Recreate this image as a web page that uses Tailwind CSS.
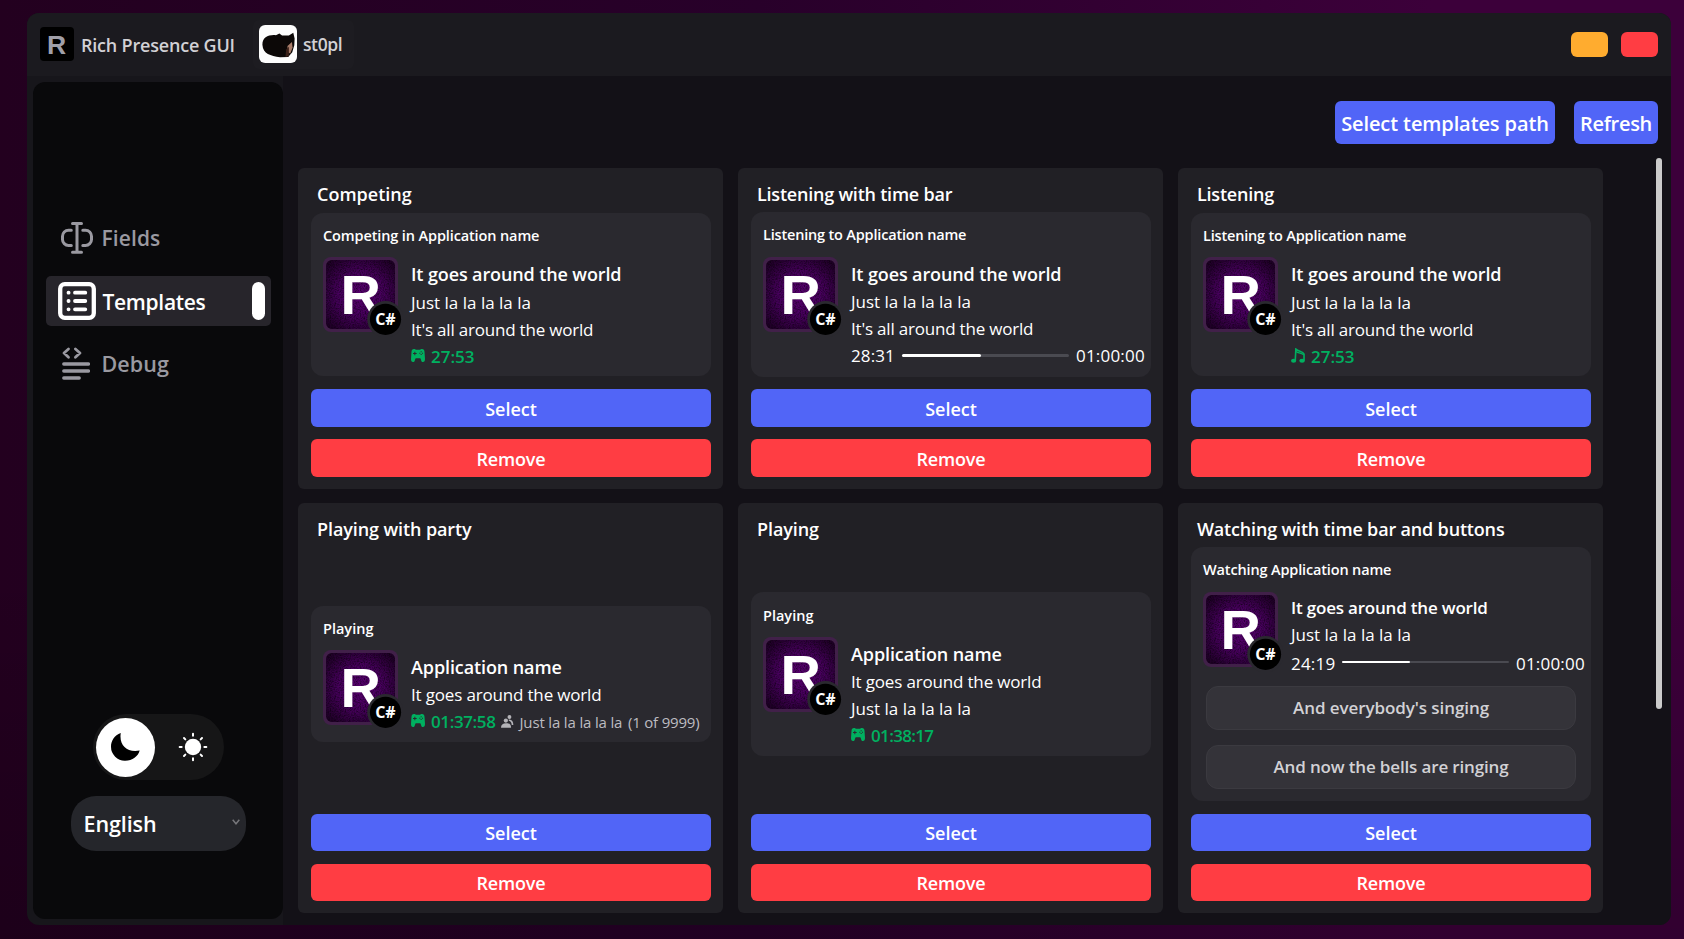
<!DOCTYPE html>
<html lang="en">
<head>
<meta charset="utf-8">
<title>Rich Presence GUI</title>
<script src="https://cdn.jsdelivr.net/npm/@tailwindcss/browser@4"></script>
</head>
<body class="h-[939px] w-[1684px] overflow-hidden bg-[linear-gradient(to_bottom,transparent_60%,rgba(0,0,0,0.18)),linear-gradient(to_right,#23001f,#28002a_45%,#3c003a_85%)] pl-[27px] pt-[13px] font-['Open_Sans','Noto_Sans',sans-serif] font-semibold text-white">

<svg class="absolute h-0 w-0">
  <defs>
    <radialGradient id="glow" cx="50%" cy="50%" r="68%">
      <stop offset="0" stop-color="#5a0072"/><stop offset="0.45" stop-color="#48005e"/><stop offset="1" stop-color="#1a0020"/>
    </radialGradient>
    <filter id="grain" x="0" y="0" width="100%" height="100%">
      <feTurbulence type="fractalNoise" baseFrequency="0.8" numOctaves="2" seed="4"/>
      <feColorMatrix values="0 0 0 0 0  0 0 0 0 0  0 0 0 0 0  1.2 0 0 0 -0.45"/>
      <feComposite in2="SourceGraphic" operator="in"/>
    </filter>
    <symbol id="cover" viewBox="0 0 80 80">
      <rect x="0" y="0" width="75" height="75" rx="8" fill="#412049"/>
      <rect x="3" y="3" width="69" height="69" rx="6" fill="url(#glow)"/>
      <rect x="3" y="3" width="69" height="69" rx="6" fill="#000" filter="url(#grain)"/>
      <text x="17.6" y="57.3" font-family="Liberation Sans, sans-serif" font-weight="700" font-size="56" fill="#fff">R</text>
      <circle cx="62.5" cy="62.3" r="18.2" fill="#2a292f"/>
      <circle cx="62.5" cy="62.3" r="15.6" fill="#000"/>
      <text x="52.2" y="68.3" textLength="20.5" lengthAdjust="spacingAndGlyphs" font-family="Open Sans, sans-serif" font-weight="700" font-size="16.5" fill="#fff">C#</text>
    </symbol>
    <symbol id="gamepad" viewBox="0 0 42 39">
      <path fill="#00b060" fill-rule="evenodd" d="M9 0C4 0 2 3 1.500 8L0 30c0 6 2 9 6 9s5-3 6-7l2-4h14l2 4c1 4 2 7 6 7s6-3 6-9L40.500 8C40 3 38 0 33 0c-3 0-4 2-6 2H15c-2 0-3-2-6-2zM10 8h3v4h4v3h-4v4h-3v-4H6v-3h4zM29 7h3v3h-3zM33 11h3v3h-3zM29 15h3v3h-3zM25 11h3v3h-3z"/>
    </symbol>
    <symbol id="music" viewBox="0 0 43 45">
      <g fill="none" stroke="#00b060" stroke-width="5"><path d="M13 38 15 3C23 11 36 8 40 18V38"/><path stroke-width="4" d="M15 10c8 6 20 5 24 11"/></g>
      <ellipse cx="8" cy="38.500" rx="8" ry="6" fill="#00b060"/><ellipse cx="34" cy="38.500" rx="8.500" ry="6" fill="#00b060"/>
    </symbol>
    <symbol id="group" viewBox="0 0 40 40">
      <g fill="#b4b3b8"><circle cx="26" cy="6" r="6"/><path d="M24 14c9-1 14 6 14 17h-5c0-7-3-11-9-13z"/><circle cx="15" cy="17" r="6.500"/><path d="M0 39c0-9 5-14 16-14s15 5 15 14z"/></g>
    </symbol>
  </defs>
</svg>

<div class="flex h-[912px] w-[1644px] flex-col overflow-hidden rounded-xl bg-[#17161b]">
  <header class="flex h-[63px] shrink-0 items-center bg-[#1b1a1f] pl-[13px] pr-[13px]">
    <svg class="-mt-[1px] h-[34px] w-[34px]" viewBox="0 0 34 34"><rect width="34" height="34" rx="4" fill="#000"/><text x="7" y="26.800" font-family="Liberation Sans, sans-serif" font-weight="700" font-size="26.500" fill="#a09fa8">R</text></svg>
    <span class="ml-[7px] mt-[2px] w-[172px] whitespace-nowrap text-[18px] tracking-[-0.2px] text-[#d2d1d5]">Rich Presence GUI</span>
    <div class="flex h-[49px] w-[101px] items-center rounded-md bg-[#1d1c21] pl-[6px]">
      <svg class="-mt-[1px] h-[38px] w-[38px]" viewBox="0 0 112 112">
        <rect width="112" height="112" rx="18" fill="#fdfdfd"/>
        <path fill="#0c0807" d="M10 58C10 36 28 28 50 30L60 25 68 31 88 31 101 23 105 40 104 60 98 80 86 94 62 95C34 90 12 86 10 58Z"/>
        <path fill="#a87c69" d="M84 62 97 50 99 66 92 84 84 80Z"/><path fill="#3a2018" d="M80 72 88 64 88 92 78 94Z"/>
      </svg>
      <span class="ml-[6px] text-[17.5px] tracking-[-0.4px] text-[#d2d1d5]">st0pl</span>
    </div>
    <div class="ml-auto flex gap-[13px]">
      <button class="h-[25px] w-[37px] rounded-md bg-[#ffac2f]"></button>
      <button class="h-[25px] w-[37px] rounded-md bg-[#ff3d43]"></button>
    </div>
  </header>

  <div class="flex min-h-0 flex-1">
    <aside class="ml-[6px] mt-[6px] flex h-[837px] w-[250px] shrink-0 flex-col items-center rounded-xl bg-[#09090b]">
      <nav class="mt-[131.500px] w-[225px] text-[21px] leading-[30px] text-[#9a99a1]">
        <a class="flex h-[49px] items-center pl-[15px]">
          <svg class="h-8 w-8" viewBox="0 0 32 32" fill="none" stroke="#9a99a1" stroke-width="3" stroke-linecap="round"><path d="M11.500 1.600h9M11.500 30.300h9M16 2v28M10.300 8.200H7.500a6 6 0 0 0-6 6v3.200a6 6 0 0 0 6 6h2.800M21.800 8.200h2.700a6 6 0 0 1 6 6v3.200a6 6 0 0 1-6 6h-2.700"/></svg>
          <span class="ml-[9px] tracking-[0.1px]">Fields</span>
        </a>
        <a class="mt-[13px] flex h-[50px] items-center rounded-[5px] bg-[#27252b] pl-[12px] pr-[6px] text-white">
          <svg class="h-[38px] w-[38px]" viewBox="0 0 38 38" fill="none" stroke="#fff" stroke-linecap="round"><rect x="2.200" y="2.200" width="33.600" height="33.600" rx="4.500" stroke-width="4.300"/><path stroke-width="3.800" d="M17 10.700h10.300M17 19h10.300M17 27.300h10.300M10.500 10.700h.1M10.500 19h.1M10.500 27.300h.1"/></svg>
          <span class="ml-[7px] mt-[2px] tracking-[-0.3px]">Templates</span>
          <span class="ml-auto h-[38px] w-[13px] rounded-full bg-white"></span>
        </a>
        <a class="mt-[13px] flex h-[50px] items-center pl-[16px]">
          <svg class="h-[34px] w-[28px]" viewBox="0 0 28 34" fill="none" stroke="#9a99a1" stroke-width="3.400" stroke-linecap="round"><path stroke-width="2.800" stroke-linejoin="round" d="M6.500 2 2 6l4.500 4.200M13.400 2 18 6l-4.600 4.200"/><path d="M1.800 17h24.600M1.800 24h24.600M1.800 31h15.400"/></svg>
          <span class="ml-[12px] text-[21.5px] tracking-[0.1px]">Debug</span>
        </a>
      </nav>
      <div class="ml-[1px] mt-auto flex h-[66px] w-[131px] items-center rounded-full bg-[#161617] pl-[2.500px]">
        <span class="grid h-[59px] w-[59px] place-items-center rounded-full bg-white">
          <svg class="h-[28px] w-[29px]" viewBox="180 131 86 83"><path d="M209 131C190 138 180 154 180 172a41 41 0 0 0 42 41c22 0 38-12 43-30C228 190 203 168 209 131Z" fill="#000"/></svg>
        </span>
        <svg class="ml-[23px] h-[30px] w-[30px]" viewBox="-45 -45 90 90"><circle r="24.500" fill="#fff"/><path stroke="#fff" stroke-width="6" stroke-linecap="round" d="M0-40v6M0 40v-6M-40 0h6M40 0h-6M-27-27l4 4M27-27l-4 4M-27 27l4-4M27 27l-4-4"/></svg>
      </div>
      <div class="mb-[68px] mt-[16px] flex h-[55px] w-[175px] items-center rounded-[25px] bg-[#25262b] pl-[13px] pr-[6px]">
        <span class="mt-[2px] text-[21.5px] tracking-[-0.1px]">English</span>
        <svg class="-mt-[4px] ml-auto h-[6px] w-[8px]" viewBox="0 0 8 6" fill="none" stroke="#76767a" stroke-width="1.500"><path d="M.7.700 4 4.700 7.300.7"/></svg>
      </div>
    </aside>

    <main class="flex min-w-0 flex-1 flex-col bg-[#131117]">
      <div class="flex justify-end gap-[19px] pr-[13px] pt-[25px] text-[20px]">
        <button class="h-[43px] w-[220px] whitespace-nowrap rounded-md bg-[#5165f7] pt-[2px] tracking-[-0.1px]">Select templates path</button>
        <button class="h-[43px] w-[84px] rounded-md bg-[#5165f7] pt-[2px] tracking-[-0.3px]">Refresh</button>
      </div>
      <div class="mt-[14px] flex justify-between pl-[15px] pr-[9px]">
        <div class="mt-[10px] grid grid-cols-[425px_425px_425px] grid-rows-[321px_410px] gap-x-[15px] gap-y-[14px]">

          <section class="flex flex-col rounded-md bg-[#212025] pb-3 pl-[13px] pr-3 pt-3">
            <h2 class="mb-1 pl-[6px] text-[18px] leading-7">Competing</h2>
            <div class="flex flex-1 items-center">
              <div class="h-[163px] w-full rounded-xl bg-[#2a292f] pl-3 pt-3">
                <p class="text-[14.5px] leading-[21px] tracking-[-0.12px]">Competing in Application name</p>
                <div class="mt-[11px] flex">
                  <svg class="h-20 w-20"><use href="#cover"/></svg>
                  <div class="ml-2 mt-[3px] text-[17px] font-normal leading-[27px]">
                    <p class="text-[18px] font-semibold leading-[29px] tracking-[-0.12px]">It goes around the world</p>
                    <p>Just la la la la la</p>
                    <p class="tracking-[-0.2px]">It's all around the world</p>
                    <p class="flex items-center font-semibold text-[#00b060]"><svg class="-mt-[2px] mr-[6px] h-[13px] w-[14px]"><use href="#gamepad"/></svg>27:53</p>
                  </div>
                </div>
              </div>
            </div>
            <button class="mt-3 h-[38px] rounded-md bg-[#5165f7] pt-[2px] text-[18px]">Select</button>
            <button class="mt-3 h-[38px] rounded-md bg-[#ff3d43] pt-[2px] text-[18px] tracking-[-0.15px]">Remove</button>
          </section>

          <section class="flex flex-col rounded-md bg-[#212025] pb-3 pl-[13px] pr-3 pt-3">
            <h2 class="mb-1 pl-[6px] text-[18px] leading-7 tracking-[-0.22px]">Listening with time bar</h2>
            <div class="flex flex-1 items-center">
              <div class="h-[165px] w-full rounded-xl bg-[#2a292f] pl-3 pt-3">
                <p class="text-[14.5px] leading-[21px] tracking-[-0.18px]">Listening to Application name</p>
                <div class="mt-[11.5px] flex">
                  <svg class="h-20 w-20"><use href="#cover"/></svg>
                  <div class="ml-2 mt-[3px] text-[17px] font-normal leading-[27px]">
                    <p class="text-[18px] font-semibold leading-[28.5px] tracking-[-0.12px]">It goes around the world</p>
                    <p>Just la la la la la</p>
                    <p class="tracking-[-0.2px]">It's all around the world</p>
                    <div class="flex items-center leading-[28px]"><span class="w-[51px] tracking-[0.1px]">28:31</span><span class="-mt-[2px] h-[3px] w-[167px] rounded-full bg-[#4a4a51]"><span class="block h-full rounded-full bg-white" style="width:47.5%"></span></span><span class="ml-[7px] tracking-[0.2px]">01:00:00</span></div>
                  </div>
                </div>
              </div>
            </div>
            <button class="mt-3 h-[38px] rounded-md bg-[#5165f7] pt-[2px] text-[18px]">Select</button>
            <button class="mt-3 h-[38px] rounded-md bg-[#ff3d43] pt-[2px] text-[18px] tracking-[-0.15px]">Remove</button>
          </section>

          <section class="flex flex-col rounded-md bg-[#212025] pb-3 pl-[13px] pr-3 pt-3">
            <h2 class="mb-1 pl-[6px] text-[18px] leading-7 tracking-[-0.22px]">Listening</h2>
            <div class="flex flex-1 items-center">
              <div class="h-[163px] w-full rounded-xl bg-[#2a292f] pl-3 pt-3">
                <p class="text-[14.5px] leading-[21px] tracking-[-0.18px]">Listening to Application name</p>
                <div class="mt-[11px] flex">
                  <svg class="h-20 w-20"><use href="#cover"/></svg>
                  <div class="ml-2 mt-[3px] text-[17px] font-normal leading-[27px]">
                    <p class="text-[18px] font-semibold leading-[29px] tracking-[-0.12px]">It goes around the world</p>
                    <p>Just la la la la la</p>
                    <p class="tracking-[-0.2px]">It's all around the world</p>
                    <p class="flex items-center font-semibold text-[#00b060]"><svg class="-mt-[2px] mr-[6px] h-[15px] w-[14px]"><use href="#music"/></svg>27:53</p>
                  </div>
                </div>
              </div>
            </div>
            <button class="mt-3 h-[38px] rounded-md bg-[#5165f7] pt-[2px] text-[18px]">Select</button>
            <button class="mt-3 h-[38px] rounded-md bg-[#ff3d43] pt-[2px] text-[18px] tracking-[-0.15px]">Remove</button>
          </section>

          <section class="flex flex-col rounded-md bg-[#212025] pb-3 pl-[13px] pr-3 pt-3">
            <h2 class="mb-[2px] pl-[6px] text-[18px] leading-7 tracking-[-0.1px]">Playing with party</h2>
            <div class="flex flex-1 items-center">
              <div class="h-[136px] w-full rounded-xl bg-[#2a292f] pl-3 pt-3">
                <p class="text-[14.5px] leading-[21px]">Playing</p>
                <div class="mt-[11.500px] flex">
                  <svg class="h-20 w-20 shrink-0"><use href="#cover"/></svg>
                  <div class="ml-2 mt-[3px] text-[17px] font-normal leading-[27px]">
                    <p class="text-[18px] font-semibold leading-[28px] tracking-[-0.1px]">Application name</p>
                    <p class="tracking-[-0.17px]">It goes around the world</p>
                    <div class="-mt-[1px] flex items-center whitespace-nowrap"><svg class="-mt-[2px] mr-[6px] h-[13px] w-[14px]"><use href="#gamepad"/></svg><span class="w-[69.5px] font-semibold tracking-[-0.39px] text-[#00b060]">01:37:58</span><svg class="mr-[6px] h-[13px] w-[13px]"><use href="#group"/></svg><span class="mt-[2px] w-[108.500px] text-[15px] tracking-[-0.16px] text-[#bdbcc1]">Just la la la la la</span><span class="mt-[2px] text-[15px] tracking-[-0.2px] text-[#bdbcc1]">(1 of 9999)</span></div>
                  </div>
                </div>
              </div>
            </div>
            <button class="mt-3 h-[37px] rounded-md bg-[#5165f7] pt-[1px] text-[18px]">Select</button>
            <button class="mt-[13px] h-[37px] rounded-md bg-[#ff3d43] pt-[1px] text-[18px] tracking-[-0.15px]">Remove</button>
          </section>

          <section class="flex flex-col rounded-md bg-[#212025] pb-3 pl-[13px] pr-3 pt-3">
            <h2 class="mb-[2px] pl-[6px] text-[18px] leading-7 tracking-[-0.1px]">Playing</h2>
            <div class="flex flex-1 items-center">
              <div class="h-[164px] w-full rounded-xl bg-[#2a292f] pl-3 pt-[13px]">
                <p class="text-[14.5px] leading-[21px]">Playing</p>
                <div class="mt-[11.500px] flex">
                  <svg class="h-20 w-20"><use href="#cover"/></svg>
                  <div class="ml-2 mt-[2.5px] text-[17px] font-normal leading-[27px]">
                    <p class="text-[18px] font-semibold leading-[28px] tracking-[-0.1px]">Application name</p>
                    <p class="tracking-[-0.17px]">It goes around the world</p>
                    <p>Just la la la la la</p>
                    <p class="flex items-center font-semibold tracking-[-0.65px] text-[#00b060]"><svg class="-mt-[2px] mr-[6px] h-[13px] w-[14px]"><use href="#gamepad"/></svg>01:38:17</p>
                  </div>
                </div>
              </div>
            </div>
            <button class="mt-3 h-[37px] rounded-md bg-[#5165f7] pt-[1px] text-[18px]">Select</button>
            <button class="mt-[13px] h-[37px] rounded-md bg-[#ff3d43] pt-[1px] text-[18px] tracking-[-0.15px]">Remove</button>
          </section>

          <section class="flex flex-col rounded-md bg-[#212025] pb-3 pl-[13px] pr-3 pt-3">
            <h2 class="mb-[2px] pl-[6px] text-[18px] leading-7 tracking-[-0.17px]">Watching with time bar and buttons</h2>
            <div class="flex flex-1 items-center">
              <div class="h-[254px] w-full rounded-xl bg-[#2a292f] pl-3 pt-3">
                <p class="text-[14.5px] leading-[21px] tracking-[-0.15px]">Watching Application name</p>
                <div class="mt-[12px] flex">
                  <svg class="h-20 w-20"><use href="#cover"/></svg>
                  <div class="ml-2 mt-[2px] text-[17px] font-normal leading-[27px]">
                    <p class="font-semibold tracking-[-0.2px]">It goes around the world</p>
                    <p>Just la la la la la</p>
                    <div class="flex items-center leading-[31px]"><span class="w-[51px] tracking-[0.2px]">24:19</span><span class="-mt-[3px] h-[2px] w-[167px] rounded-full bg-[#4a4a51]"><span class="block h-full rounded-full bg-white" style="width:40.5%"></span></span><span class="ml-[7px] tracking-[0.2px]">01:00:00</span></div>
                  </div>
                </div>
                <div class="mt-[7px] flex flex-col gap-[15px] pl-[3px] text-[17px] text-[#d2d1d5]">
                  <button class="h-[44px] w-[370px] rounded-xl border border-[#3b3a40] bg-[#343339] pt-[1px] tracking-[-0.08px]">And everybody's singing</button>
                  <button class="h-[44px] w-[370px] rounded-xl border border-[#3b3a40] bg-[#343339] pt-[1px] tracking-[-0.15px]">And now the bells are ringing</button>
                </div>
              </div>
            </div>
            <button class="mt-3 h-[37px] rounded-md bg-[#5165f7] pt-[1px] text-[18px]">Select</button>
            <button class="mt-[13px] h-[37px] rounded-md bg-[#ff3d43] pt-[1px] text-[18px] tracking-[-0.15px]">Remove</button>
          </section>

        </div>
        <div class="h-[551px] w-[6px] rounded-full bg-[#cbcbcb]"></div>
      </div>
    </main>
  </div>
</div>
</body>
</html>
